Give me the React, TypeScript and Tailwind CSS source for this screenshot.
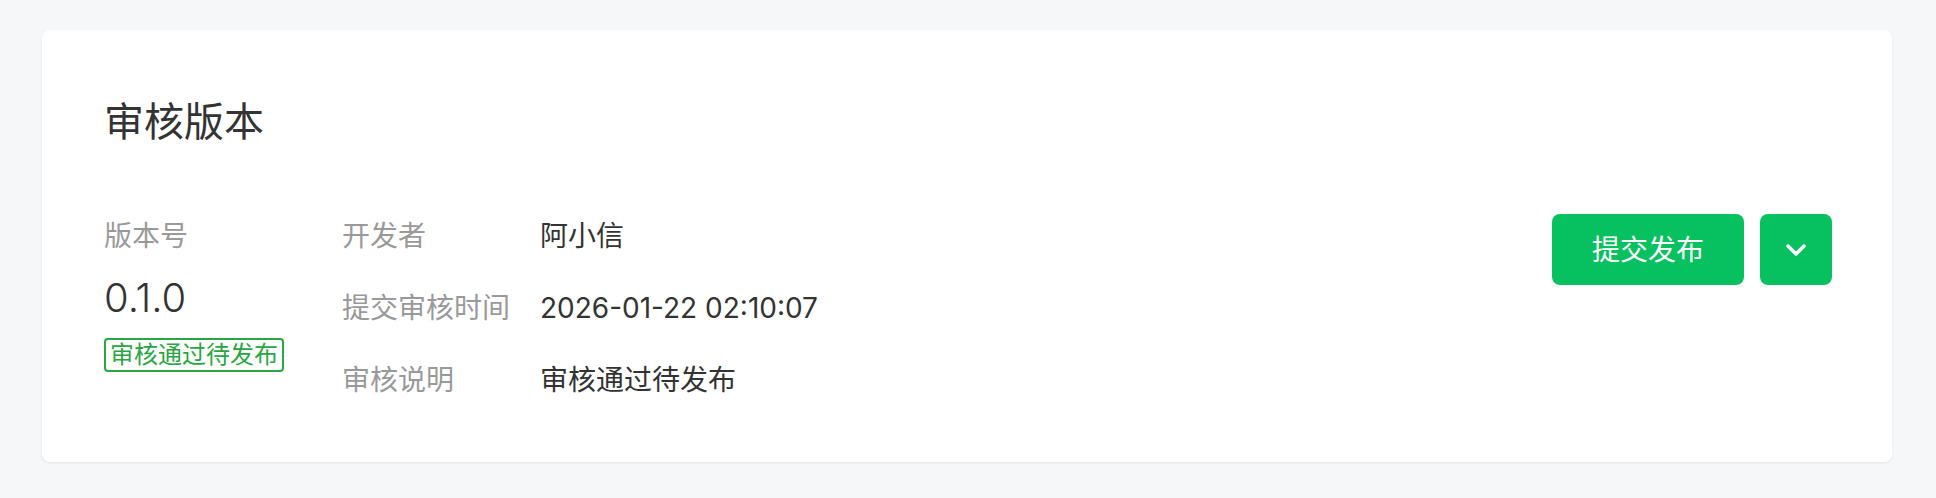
import React from 'react';

const font = { fontFamily: 'Inter, "Noto Sans CJK SC", sans-serif' };

const rows = [
  { label: '开发者', value: '阿小信' },
  { label: '提交审核时间', value: '2026-01-22 02:10:07' },
  { label: '审核说明', value: '审核通过待发布' },
];

export default function App() {
  return (
    <div className="min-h-[498px] w-full bg-[#f6f7f9] pt-[30px] pl-[42px] pr-[44px] pb-[35px]" style={font}>
      <div className="rounded-[8px] bg-white pl-[62px] pr-[60px] pt-[64px] pb-[62px] shadow-[0_1px_3px_rgba(0,0,0,0.08)]">
        {/* Title */}
        <h2 className="text-[40px] leading-[56px] text-[#333]">审核版本</h2>

        <div className="mt-[66px] flex items-start justify-between">
          <div className="flex">
            {/* Version */}
            <div className="w-[238px]">
              <p className="text-[28px] leading-[40px] text-[#999]">版本号</p>
              <p className="mt-[14px] text-[40px] font-light leading-[56px] text-[#333]">0.1.0</p>
              <span className="mt-[12px] inline-block rounded-[4px] border-2 border-[#2aa544] px-[4px] text-[24px] leading-[30px] text-[#2aa544]">
                审核通过待发布
              </span>
            </div>

            {/* Details */}
            <div className="grid grid-cols-[198px_auto] gap-y-[32px]">
              {rows.map((r) => (
                <React.Fragment key={r.label}>
                  <span className="text-[28px] leading-[40px] text-[#999]">{r.label}</span>
                  <span className="text-[28px] leading-[40px] text-[#333]">{r.value}</span>
                </React.Fragment>
              ))}
            </div>
          </div>

          {/* Actions */}
          <div className="-mt-[2px] flex gap-[16px]">
            <button className="h-[71px] w-[192px] rounded-[8px] bg-[#07c160] text-[28px] text-white">
              提交发布
            </button>
            <button className="flex h-[71px] w-[72px] items-center justify-center rounded-[8px] bg-[#07c160]">
              <svg width="22" height="14" viewBox="0 0 22 14" fill="none">
                <path d="M3 3l8 8 8-8" stroke="white" strokeWidth="3.5" strokeLinecap="round" strokeLinejoin="round" />
              </svg>
            </button>
          </div>
        </div>
      </div>
    </div>
  );
}
